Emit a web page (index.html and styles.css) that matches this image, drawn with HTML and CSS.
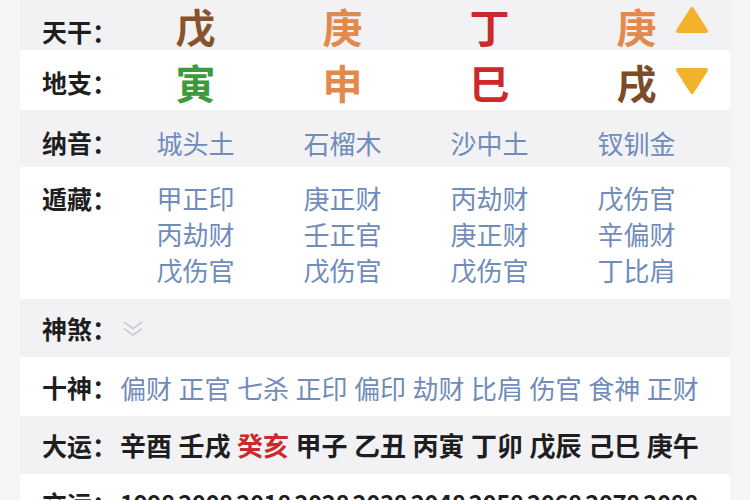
FILE: index.html
```html
<!DOCTYPE html>
<html lang="zh-CN">
<head>
<meta charset="utf-8">
<link rel="stylesheet" href="styles.css">
</head>
<body>
<div class="card">
  <div class="row grid alt r1">
    <div class="label lbl-r1">天干：</div>
    <div class="big c-brown">戊</div>
    <div class="big c-orange">庚</div>
    <div class="big c-red">丁</div>
    <div class="big c-orange last">庚
      <svg class="tri up" width="34" height="28" viewBox="0 0 34 28"><polygon points="17,3 31,25 3,25" fill="#f2b22c" stroke="#f2b22c" stroke-width="4" stroke-linejoin="round"/></svg>
    </div>
  </div>
  <div class="row grid r2">
    <div class="label">地支：</div>
    <div class="big c-green">寅</div>
    <div class="big c-orange">申</div>
    <div class="big c-red">巳</div>
    <div class="big c-brown2 last">戌
      <svg class="tri down" width="34" height="28" viewBox="0 0 34 28"><polygon points="3,3 31,3 17,25" fill="#f2b22c" stroke="#f2b22c" stroke-width="4" stroke-linejoin="round"/></svg>
    </div>
  </div>
  <div class="row grid alt r3">
    <div class="label">纳音：</div>
    <div class="val">城头土</div>
    <div class="val">石榴木</div>
    <div class="val">沙中土</div>
    <div class="val">钗钏金</div>
  </div>
  <div class="row grid r4">
    <div class="label">遁藏：</div>
    <div class="val stack"><span>甲正印</span><span>丙劫财</span><span>戊伤官</span></div>
    <div class="val stack"><span>庚正财</span><span>壬正官</span><span>戊伤官</span></div>
    <div class="val stack"><span>丙劫财</span><span>庚正财</span><span>戊伤官</span></div>
    <div class="val stack"><span>戊伤官</span><span>辛偏财</span><span>丁比肩</span></div>
  </div>
  <div class="row line alt r5">
    <div class="label">神煞：</div>
    <svg class="chev" width="24" height="18" viewBox="0 0 24 18"><polyline points="3,2 12,8.5 21,2" fill="none" stroke="#c3c7cf" stroke-width="1.5"/><polyline points="3,8.5 12,15 21,8.5" fill="none" stroke="#c3c7cf" stroke-width="1.5"/></svg>
  </div>
  <div class="row line r6">
    <div class="label">十神：</div>
    <div class="words blue">
      <span>偏财</span><span>正官</span><span>七杀</span><span>正印</span><span>偏印</span><span>劫财</span><span>比肩</span><span>伤官</span><span>食神</span><span>正财</span>
    </div>
  </div>
  <div class="row line alt r7">
    <div class="label">大运：</div>
    <div class="words dark">
      <span>辛酉</span><span>壬戌</span><span class="c-red">癸亥</span><span>甲子</span><span>乙丑</span><span>丙寅</span><span>丁卯</span><span>戊辰</span><span>己巳</span><span>庚午</span>
    </div>
  </div>
  <div class="row line r8">
    <div class="label">交运：</div>
    <div class="years">
      <span>1998</span><span>2008</span><span>2018</span><span>2028</span><span>2038</span><span>2048</span><span>2058</span><span>2068</span><span>2078</span><span>2088</span>
    </div>
  </div>
</div>
</body>
</html>
```

FILE: styles.css
```css
* { box-sizing: border-box; }
html, body {
  margin: 0;
  padding: 0;
  background: #f5f5f7;
  font-family: "Noto Sans CJK SC", "Noto Sans", sans-serif;
  overflow: hidden;
}
.card {
  margin: 0 20px;
  width: 710px;
  background: #ffffff;
}
.row {
  padding-left: 22px;
}
.row.alt { background: #f2f2f5; }
.grid {
  display: grid;
  grid-template-columns: 80px repeat(4, 147px);
  align-items: center;
}
.line {
  display: flex;
  align-items: center;
}
.label {
  font-size: 25px;
  font-weight: 700;
  color: #1e1e1e;
  line-height: 1;
  white-space: nowrap;
}
.line .label { width: 78px; flex: none; }
.big {
  font-size: 40px;
  font-weight: 700;
  line-height: 1;
  text-align: center;
}
.last { position: relative; }
.tri { position: absolute; left: 112px; }
.tri.up { top: 0px; }
.tri.down { top: 5px; }
.c-brown { color: #87532a; }
.c-brown2 { color: #7a4c28; }
.c-orange { color: #e3894a; }
.c-red { color: #cc2a2a; }
.c-green { color: #3d9a3d; }
.val {
  font-size: 26px;
  color: #6f8cba;
  text-align: center;
  line-height: 1;
}
.r1 { height: 50px; padding-top: 2px; }
.lbl-r1 { padding-top: 10px; }
.r2 { height: 60px; padding-top: 4px; }
.r3 { height: 57px; padding-top: 8px; }
.r4 { height: 132px; align-items: start; padding-top: 13px; }
.r4 .label { line-height: 36px; }
.stack { display: flex; flex-direction: column; line-height: 36px; }
.r5 { height: 58px; }
.chev { margin-left: 1px; margin-top: 2px; }
.r6 { height: 59px; padding-top: 2px; }
.r7 { height: 58px; }
.r8 { height: 58px; }
.words {
  display: flex;
  gap: 6.5px;
  font-size: 26px;
  line-height: 1;
  white-space: nowrap;
}
.words.blue { color: #6f8cba; }
.words.dark { color: #1e1e1e; font-weight: 700; }
.words .c-red { color: #cc2a2a; }
.years {
  display: flex;
  width: 578px;
  justify-content: space-between;
  font-size: 24px;
  font-weight: 700;
  color: #1e1e1e;
  line-height: 1;
  letter-spacing: -0.5px;
}
```
